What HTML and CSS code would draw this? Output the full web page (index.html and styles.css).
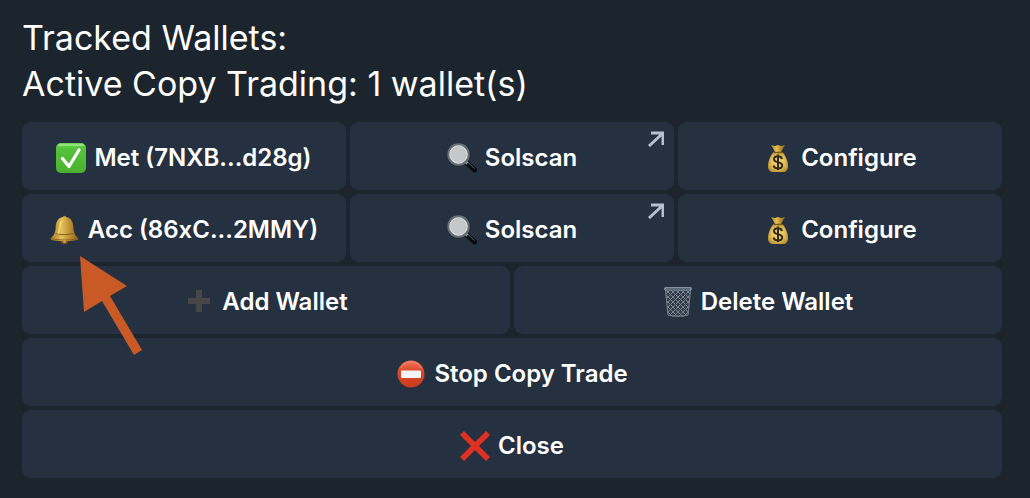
FILE: index.html
```html
<!DOCTYPE html>
<html lang="en">
<head>
    <meta charset="UTF-8">
    <meta name="viewport" content="width=device-width, initial-scale=1.0">
    <title>Tracked Wallets</title>
    <link rel="stylesheet" href="styles.css">
</head>
<body>
    <!-- Shared icons -->
    <svg class="icon-defs" aria-hidden="true">
        <defs>
            <linearGradient id="green" x1="0" y1="0" x2="0" y2="1">
                <stop offset="0" stop-color="#6fd654"/>
                <stop offset="0.2" stop-color="#55c23a"/>
                <stop offset="1" stop-color="#4bb030"/>
            </linearGradient>
            <linearGradient id="gold" x1="0" y1="0" x2="1" y2="0">
                <stop offset="0" stop-color="#a87b26"/>
                <stop offset="0.4" stop-color="#e3bf58"/>
                <stop offset="0.65" stop-color="#c3953a"/>
                <stop offset="1" stop-color="#8f6118"/>
            </linearGradient>
            <radialGradient id="bag" cx="0.5" cy="0.5" r="0.6">
                <stop offset="0" stop-color="#f3dc86"/>
                <stop offset="0.6" stop-color="#e2bb55"/>
                <stop offset="1" stop-color="#b58528"/>
            </radialGradient>
            <linearGradient id="red" x1="0" y1="0" x2="0" y2="1">
                <stop offset="0" stop-color="#f0755a"/>
                <stop offset="0.4" stop-color="#dd4829"/>
                <stop offset="1" stop-color="#c93a1c"/>
            </linearGradient>
            <pattern id="mesh" width="5" height="5" patternUnits="userSpaceOnUse">
                <rect width="5" height="5" fill="#323d49"/>
                <path d="M0 0l5 5M5 0L0 5" stroke="#76848f" stroke-width="1"/>
            </pattern>
        </defs>
        <symbol id="icon-search" viewBox="0 0 30 30">
            <path d="M19.5 19.5l8 7.5" stroke="#090b0d" stroke-width="5" stroke-linecap="round"/>
            <path d="M20.5 19l7 6.5" stroke="#56606a" stroke-width="1"/>
            <path d="M17.5 17.5l3 3" stroke="#8e969c" stroke-width="3"/>
            <circle cx="11.5" cy="11.5" r="10" fill="#c5c8ca" stroke="#686f75" stroke-width="2.4"/>
            <circle cx="11.5" cy="11.5" r="8.800" fill="none" stroke="#dcdedf" stroke-width="1"/>
        </symbol>
        <symbol id="icon-bag" viewBox="0 0 30 30">
            <path d="M8 2l4 1 3-1 3 1 4-1-4 7h-6z" fill="url(#gold)"/>
            <path d="M11 9h8c3 2 6 9 6 14 0 4-2 6-5 6H10c-3 0-5-2-5-6 0-5 3-12 6-14z" fill="url(#bag)"/>
            <path d="M11 9.5h8" stroke="#805a1c" stroke-width="1.5"/>
            <path d="M19 16c-.5-2-2-2.700-4-2.700-2.300 0-4 1-4 3 0 4.200 8.200 1.800 8.200 6 0 2-1.800 3.200-4.200 3.200s-4-1-4.400-3M15 11.500v15.500" fill="none" stroke="#332a16" stroke-width="2"/>
        </symbol>
        <symbol id="icon-out" viewBox="0 0 16 16">
            <path d="M3 2h12v12M14 3L1 15" fill="none" stroke="#b3c0cf" stroke-width="3"/>
        </symbol>
    </svg>

    <main class="message">
        <p class="text">Tracked Wallets:<br>Active Copy Trading: 1 wallet(s)</p>

        <div class="keyboard">
            <div class="row">
                <button class="key" type="button">
                    <svg class="icon" viewBox="0 0 30 30" aria-hidden="true">
                        <rect width="30" height="30" rx="5" fill="url(#green)"/>
                        <path d="M3 2h24" stroke="#a2e68e" stroke-width="1.500" stroke-linecap="round"/>
                        <path d="M6.500 15.500l6.500 8L23 7" fill="none" stroke="#fff" stroke-width="3.300" stroke-linecap="round" stroke-linejoin="round"/>
                    </svg>
                    Met (7NXB...d28g)
                </button>
                <a class="key" href="#">
                    <svg class="icon" aria-hidden="true"><use href="#icon-search"/></svg>
                    Solscan
                    <svg class="out" aria-hidden="true"><use href="#icon-out"/></svg>
                </a>
                <button class="key" type="button">
                    <svg class="icon" aria-hidden="true"><use href="#icon-bag"/></svg>
                    Configure
                </button>
            </div>

            <div class="row">
                <button class="key" type="button">
                    <svg class="icon" viewBox="0 0 30 30" aria-hidden="true">
                        <circle cx="14.500" cy="2.500" r="1.800" fill="#c49636"/>
                        <circle cx="14.500" cy="25.500" r="3.800" fill="#825516"/>
                        <path d="M14.500 2C8 2 6 6.500 5.700 12c-.3 5-1.200 8-5.200 11.500 0 1.500 2 2.500 14 2.500s14-1 14-2.500C24.500 20 23.600 17 23.300 12 23 6.500 21 2 14.500 2z" fill="url(#gold)"/>
                        <path d="M1.500 23.500c6 2 20 2 26 0M5.500 18.500c5 1.500 13 1.500 18 0" fill="none" stroke="#8b6119" stroke-width="1"/>
                        <path d="M11 7c-1.500 3-1 8-2.500 11" fill="none" stroke="#f0d679" stroke-width="1.800" stroke-linecap="round"/>
                        <circle cx="14.500" cy="26.500" r="1.500" fill="#d39d3d"/>
                    </svg>
                    Acc (86xC...2MMY)
                </button>
                <a class="key" href="#">
                    <svg class="icon" aria-hidden="true"><use href="#icon-search"/></svg>
                    Solscan
                    <svg class="out" aria-hidden="true"><use href="#icon-out"/></svg>
                </a>
                <button class="key" type="button">
                    <svg class="icon" aria-hidden="true"><use href="#icon-bag"/></svg>
                    Configure
                </button>
                <svg class="pointer" viewBox="0 0 62 99" aria-hidden="true">
                    <path d="M0 0l47 30-17 10 32 54-8 5-32-54-18 11z" fill="#c95a25"/>
                </svg>
            </div>

            <div class="row">
                <button class="key" type="button">
                    <svg class="icon" viewBox="0 0 30 30" aria-hidden="true">
                        <path d="M12 3h6v8h8v6h-8v8h-6v-8H4v-6h8z" fill="#474747"/>
                    </svg>
                    Add Wallet
                </button>
                <button class="key" type="button">
                    <svg class="icon" viewBox="0 0 30 30" aria-hidden="true">
                        <path d="M2 2h26l-3 27c-5 1.300-15 1.300-20 0z" fill="url(#mesh)"/>
                        <path d="M2.500 3L5 28M27.500 3L25 28M5 28c5 1.500 15 1.500 20 0" fill="none" stroke="#6d7985" stroke-width="1.200"/>
                        <rect x="1" y="0" width="28" height="3.500" rx="1.700" fill="#82919f"/>
                        <path d="M3 2h24" stroke="#394550" stroke-width="1"/>
                    </svg>
                    Delete Wallet
                </button>
            </div>

            <div class="row">
                <button class="key" type="button">
                    <svg class="icon" viewBox="0 0 30 30" aria-hidden="true">
                        <circle cx="15" cy="15" r="13.500" fill="url(#red)"/>
                        <path d="M5 9c4-8 16-8 20 0" fill="none" stroke="#f58b70" stroke-width="1"/>
                        <rect x="5" y="11.500" width="20" height="7.500" rx="1" fill="#f4f4f4"/>
                    </svg>
                    Stop Copy Trade
                </button>
            </div>

            <div class="row">
                <button class="key" type="button">
                    <svg class="icon" viewBox="0 0 30 30" aria-hidden="true">
                        <path d="M4 0l11 11L26 0l4 4-11 11 11 11-4 4-11-11L4 30l-4-4 11-11L0 4z" fill="#df3021"/>
                    </svg>
                    Close
                </button>
            </div>
        </div>
    </main>
</body>
</html>
```
FILE: styles.css
```css
body {
    margin: 0;
    background-color: #1c242d;
    color: #fff;
    font-family: Inter, "Liberation Sans", sans-serif;
}
.icon-defs {
    position: absolute;
    width: 0;
    height: 0;
}
.message {
    padding: 15px 28px 20px 22px;
}
.text {
    margin: 0 0 15px;
    font-size: 34px;
    line-height: 46px;
}
.keyboard {
    display: flex;
    flex-direction: column;
    gap: 4px;
}
.row {
    position: relative;
    display: flex;
    gap: 4px;
}
.key {
    position: relative;
    flex: 1 1 0;
    display: flex;
    align-items: center;
    justify-content: center;
    gap: 8px;
    box-sizing: border-box;
    min-height: 68px;
    padding: 11px 8px 8px;
    border: none;
    border-radius: 9px;
    background-color: #253040;
    color: #fff;
    font-family: inherit;
    font-size: 24px;
    font-weight: 600;
    line-height: 32px;
    text-decoration: none;
    white-space: nowrap;
    cursor: pointer;
}
.key:hover {
    background-color: #2c394b;
}
.icon {
    flex: none;
    width: 30px;
    height: 30px;
}
.out {
    position: absolute;
    top: 9px;
    right: 10px;
    width: 16px;
    height: 16px;
}
/* points at the bell of the second wallet */
.pointer {
    position: absolute;
    z-index: 1;
    top: 62px;
    left: 58px;
    width: 62px;
    height: 99px;
    pointer-events: none;
}
```
